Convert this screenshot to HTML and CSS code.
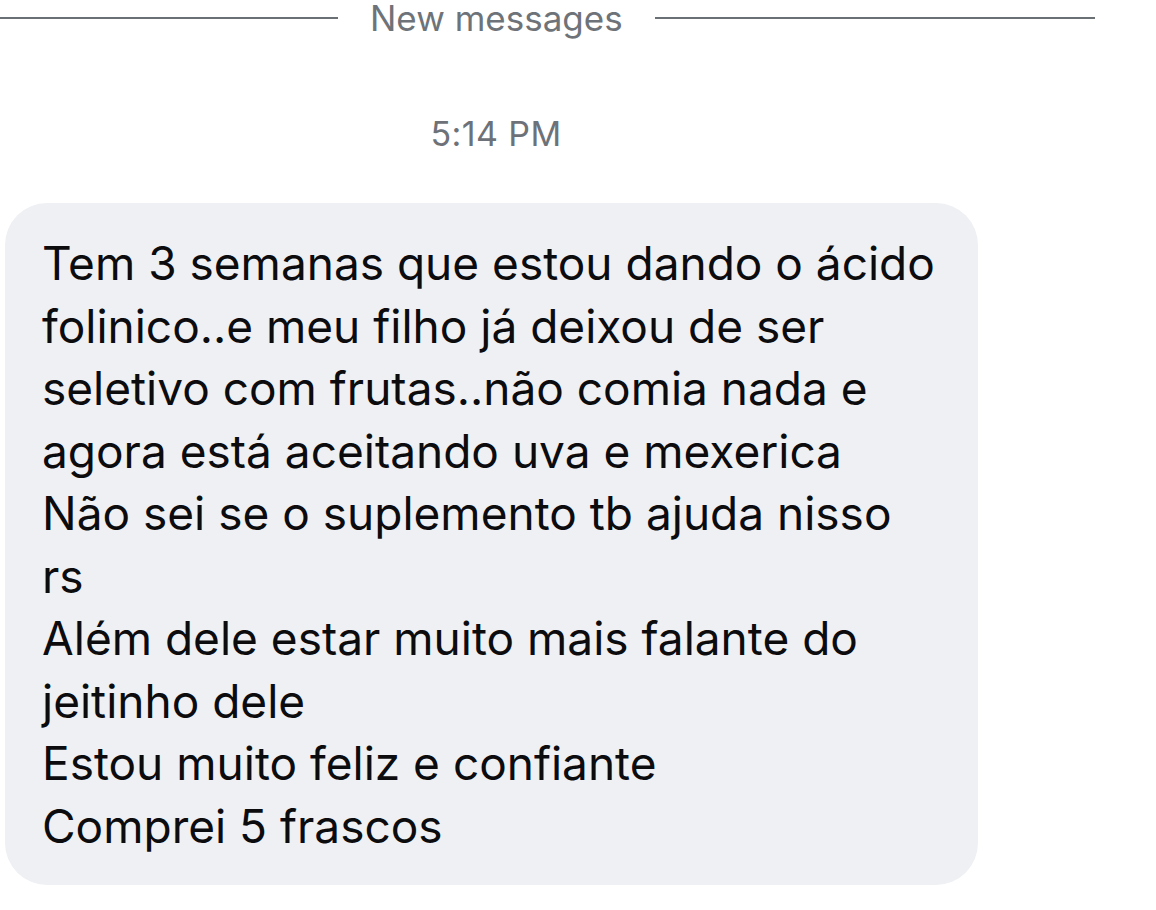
FILE: index.html
```html
<!DOCTYPE html>
<html lang="en">
  <head>
    <title>Messages</title>
    <link rel="stylesheet" href="styles.css">
  </head>

  <body>
    <div class="thread">
      <div class="divider">
        <span class="divider-line divider-left"></span>
        <span class="divider-text">New messages</span>
        <span class="divider-line divider-right"></span>
      </div>

      <div class="timestamp">5:14 PM</div>

      <div class="bubble">
        <p>Tem 3 semanas que estou dando o ácido folinico..e meu filho já deixou de ser seletivo com frutas..não comia nada e agora está aceitando uva e mexerica</p>
        <p>Não sei se o suplemento tb ajuda nisso rs</p>
        <p>Além dele estar muito mais falante do jeitinho dele</p>
        <p>Estou muito feliz e confiante</p>
        <p>Comprei 5 frascos</p>
      </div>
    </div>
  </body>
</html>
```

FILE: styles.css
```css
body {
  margin: 0;
  padding: 0;
  font-family: Inter, "Noto Sans", sans-serif;
  color: #0c0c0e;
  background-color: #fff;
}

.thread {
  width: 1095px;
}

.divider {
  display: flex;
  align-items: center;
  height: 36px;
}

.divider-line {
  height: 2px;
  background-color: #6b7075;
}

.divider-left {
  width: 338px;
}

.divider-right {
  flex: 1;
}

.divider-text {
  padding: 0 32px;
  font-size: 35px;
  line-height: 36px;
  color: #6e7379;
}

.timestamp {
  width: 992px;
  margin-top: 78px;
  text-align: center;
  font-size: 34px;
  line-height: 40px;
  letter-spacing: 0.4px;
  color: #6d7278;
}

.bubble {
  width: 899px;
  margin: 49px 0 0 5px;
  padding: 29px 37px 28px;
  background-color: #eff0f4;
  border-radius: 42px;
  font-size: 46px;
  line-height: 62.5px;
}

.bubble p {
  margin: 0;
}
```
